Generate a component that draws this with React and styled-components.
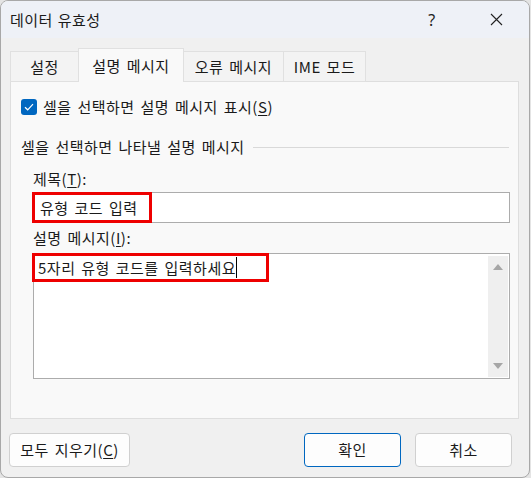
import React from "react";
import styled, { createGlobalStyle } from "styled-components";

const Global = createGlobalStyle`
  html, body { margin: 0; padding: 0; background: #e4e4e4; }
  body { font-family: "Noto Sans CJK KR", "Noto Sans", sans-serif; color: #1a1a1a; }
  * { box-sizing: border-box; }
`;

const Window = styled.div`
  width: 530px;
  height: 478px;
  border: 1px solid #a8a8a8;
  border-radius: 8px;
  overflow: hidden;
  background: #f0f0f0;
  display: flex;
  flex-direction: column;
  font-size: 15px;
  line-height: 20px;
  letter-spacing: 0.5px;
  word-spacing: 2px;
`;

const TitleBar = styled.div`
  height: 37px;
  flex: none;
  background: #eef1f7;
  display: flex;
  align-items: center;
  padding-left: 9px;
`;

const Title = styled.div`
  flex: 1;
  font-size: 15px;
  letter-spacing: 0.5px;
  word-spacing: 1px;
`;

const TitleButton = styled.div`
  width: ${(p) => p.$w}px;
  height: 37px;
  display: flex;
  align-items: center;
  justify-content: center;
  font-family: "Segoe UI", "Noto Sans", sans-serif;
  font-size: 16px;
  color: #222;
`;

const Body = styled.div`
  padding: 10px 10px 0 9px;
  display: flex;
  flex-direction: column;
`;

const TabRow = styled.div`
  display: flex;
  align-items: flex-end;
  height: 34px;
  margin-bottom: -1px;
  position: relative;
  z-index: 1;
`;

const Tab = styled.div`
  width: ${(p) => p.$w}px;
  height: ${(p) => (p.$active ? 34 : 31)}px;
  border: 1px solid #e0e0e0;
  border-bottom: ${(p) => (p.$active ? "none" : "1px solid #e0e0e0")};
  margin-left: ${(p) => (p.$first ? 0 : -1)}px;
  background: ${(p) => (p.$active ? "#f9f9f9" : "#f3f3f3")};
  display: flex;
  align-items: center;
  justify-content: center;
  padding-top: ${(p) => (p.$active ? 1 : 0)}px;
`;

const Panel = styled.div`
  height: 338px;
  border: 1px solid #dedede;
  background: #f9f9f9;
  padding: 17px 9px 0 10px;
  display: flex;
  flex-direction: column;
`;

const CheckRow = styled.div`
  display: flex;
  align-items: center;
  height: 16px;
  gap: 6px;
`;

const CheckBox = styled.div`
  width: 16px;
  height: 16px;
  border-radius: 3px;
  background: #0067c0;
  display: flex;
  align-items: center;
  justify-content: center;
`;

const Label = styled.div`
  white-space: nowrap;
  u { text-decoration-thickness: 1px; text-underline-offset: 2px; }
`;

const GroupHeader = styled.div`
  display: flex;
  align-items: center;
  gap: 8px;
  margin-top: 22px;
  height: 20px;
`;

const Rule = styled.div`
  flex: 1;
  height: 1px;
  background: #d9d9d9;
`;

const Group = styled.div`
  padding-left: 12px;
  display: flex;
  flex-direction: column;
`;

const FieldLabel = styled(Label)`
  margin-top: ${(p) => p.$mt}px;
  height: 20px;
`;

const Field = styled.div`
  position: relative;
  width: 477px;
  height: ${(p) => p.$h}px;
  margin-top: ${(p) => p.$mt}px;
  border: 1px solid #acacac;
  background: #fff;
  display: flex;
  align-items: flex-start;
`;

const FieldText = styled.div`
  padding: ${(p) => p.$pad};
  display: flex;
  align-items: center;
  height: ${(p) => p.$h}px;
  white-space: pre;
`;

const Caret = styled.span`
  display: inline-block;
  width: 1px;
  height: 21px;
  background: #000;
`;

const Highlight = styled.div`
  position: absolute;
  left: -2px;
  top: -1px;
  width: ${(p) => p.$w}px;
  height: ${(p) => p.$h}px;
  border: 3px solid #ee0000;
  pointer-events: none;
`;

const ScrollBar = styled.div`
  position: absolute;
  right: 1px;
  top: 2px;
  bottom: 1px;
  width: 20px;
  background: #efefef;
  display: flex;
  flex-direction: column;
  justify-content: space-between;
  align-items: center;
  padding: 8px 0 8px;
`;

const Footer = styled.div`
  display: flex;
  align-items: center;
  padding: 14px 17px 0 8px;
  gap: 14px;
`;

const Button = styled.div`
  width: ${(p) => p.$w}px;
  height: 34px;
  border: ${(p) => (p.$primary ? "1.5px solid #0067c0" : "1px solid #d0d0d0")};
  border-radius: 4px;
  background: #fdfdfd;
  display: flex;
  align-items: center;
  justify-content: center;
  margin-left: ${(p) => (p.$push ? "auto" : "0")};
  u { text-decoration-thickness: 1px; text-underline-offset: 2px; }
`;

export default function App() {
  return (
    <>
      <Global />
      <Window>
        <TitleBar>
          <Title>데이터 유효성</Title>
          <TitleButton $w={20}>?</TitleButton>
          <TitleButton $w={44} />
          <TitleButton $w={20}>
            <svg width="13" height="13" viewBox="0 0 13 13">
              <path d="M1 1 L12 12 M12 1 L1 12" stroke="#222" strokeWidth="1.1" fill="none" />
            </svg>
          </TitleButton>
          <TitleButton $w={23} />
        </TitleBar>
        <Body>
          <TabRow>
            <Tab $w={69} $first>설정</Tab>
            <Tab $w={106} $active>설명 메시지</Tab>
            <Tab $w={101}>오류 메시지</Tab>
            <Tab $w={83}>IME 모드</Tab>
          </TabRow>
          <Panel>
            <CheckRow>
              <CheckBox>
                <svg width="10" height="8" viewBox="0 0 10 8">
                  <path d="M1 4.2 L3.7 6.8 L9 1.2" stroke="#fff" strokeWidth="1.2" fill="none" />
                </svg>
              </CheckBox>
              <Label>
                셀을 선택하면 설명 메시지 표시(<u>S</u>)
              </Label>
            </CheckRow>
            <GroupHeader>
              <Label>셀을 선택하면 나타낼 설명 메시지</Label>
              <Rule />
            </GroupHeader>
            <Group>
              <FieldLabel $mt={12}>
                제목(<u>T</u>):
              </FieldLabel>
              <Field $h={31} $mt={3}>
                <FieldText $pad="0 0 0 6px" $h={29}>유형 코드 입력</FieldText>
                <Highlight $w={120} $h={31} />
              </Field>
              <FieldLabel $mt={5}>
                설명 메시지(<u>I</u>):
              </FieldLabel>
              <Field $h={126} $mt={5}>
                <FieldText $pad="0 0 0 4px" $h={27}>
                  5자리 유형 코드를 입력하세요
                  <Caret />
                </FieldText>
                <Highlight $w={237} $h={29} />
                <ScrollBar>
                  <svg width="10" height="6" viewBox="0 0 10 6">
                    <path d="M5 0 L10 6 L0 6 Z" fill="#a6a6a6" />
                  </svg>
                  <svg width="10" height="6" viewBox="0 0 10 6">
                    <path d="M0 0 L10 0 L5 6 Z" fill="#a6a6a6" />
                  </svg>
                </ScrollBar>
              </Field>
            </Group>
          </Panel>
        </Body>
        <Footer>
          <Button $w={121}>
            모두 지우기(<u>C</u>)
          </Button>
          <Button $w={97} $primary $push>
            확인
          </Button>
          <Button $w={97}>취소</Button>
        </Footer>
      </Window>
    </>
  );
}
